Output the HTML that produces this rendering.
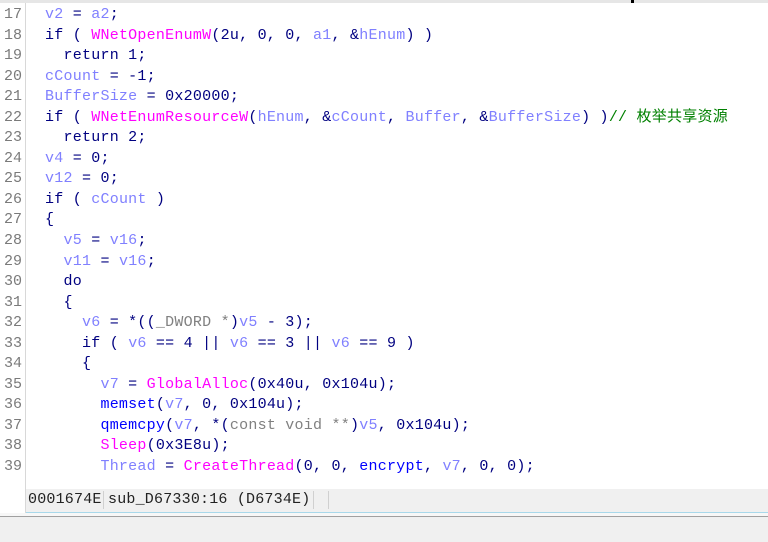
<!DOCTYPE html>
<html><head><meta charset="utf-8"><style>
*{margin:0;padding:0}
body{width:768px;height:542px;overflow:hidden;background:#f0f0f0;position:relative;font-family:"Liberation Mono","Noto Sans CJK SC",monospace}
#top{position:absolute;left:0;top:0;width:768px;height:3px;background:#e6e6e6}
#mark{position:absolute;left:631px;top:0;width:3px;height:3px;background:#000}
#ed{position:absolute;left:0;top:3px;width:768px;height:486px;background:#fff}
#gut{position:absolute;left:0;top:3px;width:25px;height:513px;background:#fff;border-right:1px solid #d8d8d8}
.ln{position:absolute;left:0;width:22px;text-align:right;font-size:15px;color:#7a7a7a;line-height:20.55px}
.cd{position:absolute;left:45px;font-size:15px;letter-spacing:0.24px;line-height:20.55px;white-space:pre;color:#000080}
.v{color:#8080ff}.f{color:#ff00ff}.t{color:#808080}.c{color:#008000}.b{color:#0000ff}
#sb{position:absolute;left:26px;top:489px;width:742px;height:23px;background:#f0f0f0;border-bottom:1px solid #a8d8ea}
#sb span{position:absolute;top:2px;font-family:"Liberation Mono",monospace;font-size:15px;letter-spacing:0.2px;color:#222}
.sep{position:absolute;top:2px;width:1px;height:18px;background:#d0d0d0}
#bl{position:absolute;left:0;top:516px;width:768px;height:1px;background:#a0a0a0}
#gap{position:absolute;left:0;top:513px;width:768px;height:3px;background:#f7f7f7}
</style></head><body>
<div id="top"></div><div id="mark"></div>
<div id="ed"></div>
<div id="gut"></div>
<div class="ln" style="top:5px">17<br>18<br>19<br>20<br>21<br>22<br>23<br>24<br>25<br>26<br>27<br>28<br>29<br>30<br>31<br>32<br>33<br>34<br>35<br>36<br>37<br>38<br>39</div>
<div class="cd" style="top:5px"><span class="v">v2</span> = <span class="v">a2</span>;
if ( <span class="f">WNetOpenEnumW</span>(2u, 0, 0, <span class="v">a1</span>, &amp;<span class="v">hEnum</span>) )
  return 1;
<span class="v">cCount</span> = -1;
<span class="v">BufferSize</span> = 0x20000;
if ( <span class="f">WNetEnumResourceW</span>(<span class="v">hEnum</span>, &amp;<span class="v">cCount</span>, <span class="v">Buffer</span>, &amp;<span class="v">BufferSize</span>) )<span class="c">// 枚举共享资源</span>
  return 2;
<span class="v">v4</span> = 0;
<span class="v">v12</span> = 0;
if ( <span class="v">cCount</span> )
{
  <span class="v">v5</span> = <span class="v">v16</span>;
  <span class="v">v11</span> = <span class="v">v16</span>;
  do
  {
    <span class="v">v6</span> = *((<span class="t">_DWORD *</span>)<span class="v">v5</span> - 3);
    if ( <span class="v">v6</span> == 4 || <span class="v">v6</span> == 3 || <span class="v">v6</span> == 9 )
    {
      <span class="v">v7</span> = <span class="f">GlobalAlloc</span>(0x40u, 0x104u);
      <span class="b">memset</span>(<span class="v">v7</span>, 0, 0x104u);
      <span class="b">qmemcpy</span>(<span class="v">v7</span>, *(<span class="t">const void **</span>)<span class="v">v5</span>, 0x104u);
      <span class="f">Sleep</span>(0x3E8u);
      <span class="v">Thread</span> = <span class="f">CreateThread</span>(0, 0, <span class="b">encrypt</span>, <span class="v">v7</span>, 0, 0);</div>
<div id="sb"><span style="left:2px">0001674E</span><div class="sep" style="left:77px"></div><span style="left:82px">sub_D67330:16 (D6734E)</span><div class="sep" style="left:287px"></div><div class="sep" style="left:302px"></div></div>
<div id="gap"></div>
<div id="bl"></div>
</body></html>
